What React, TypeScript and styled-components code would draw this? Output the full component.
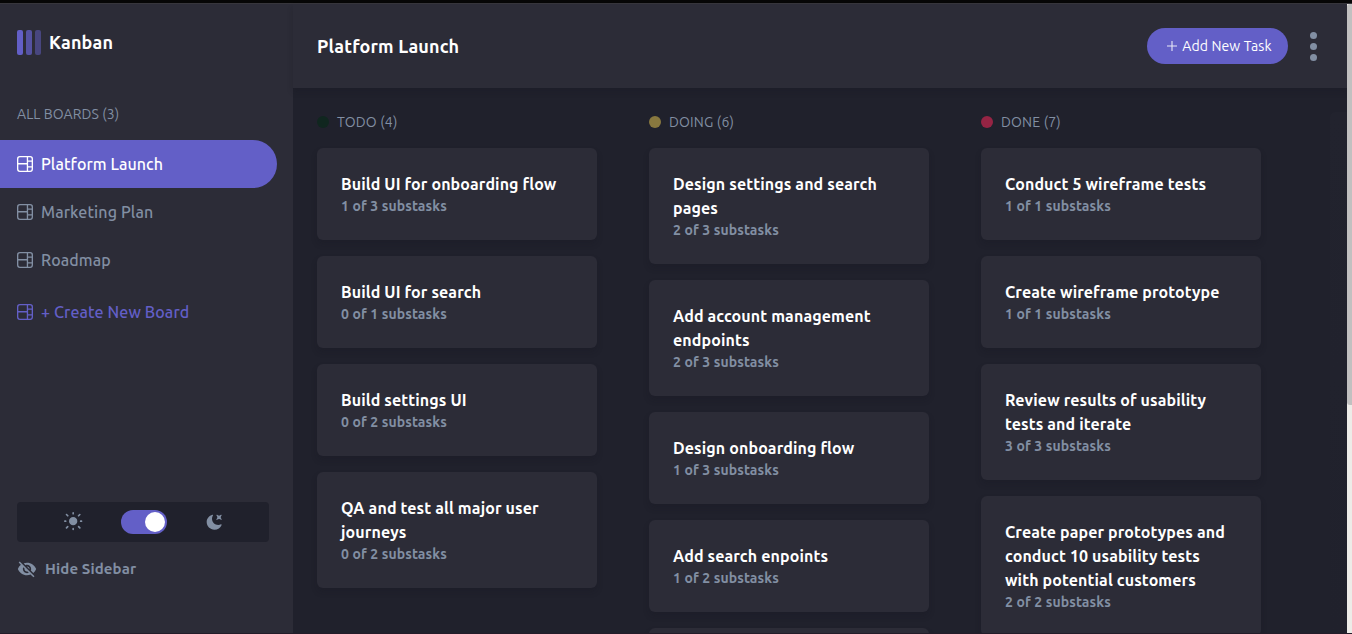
import React from 'react';
import styled, { createGlobalStyle, css } from 'styled-components';
import { MdVisibilityOff } from 'react-icons/md';

const GlobalStyle = createGlobalStyle`
  *, *::before, *::after { box-sizing: border-box; }
  body {
    margin: 0;
    overflow: hidden;
    background: #20212c;
    font-family: Ubuntu, 'Noto Sans', sans-serif;
    letter-spacing: 0.11px;
  }
  button { font: inherit; letter-spacing: inherit; border: 0; padding: 0; background: none; cursor: pointer; }
  h1, h2, h3, p { margin: 0; }
`;

const Page = styled.div`
  display: flex;
  flex-direction: column;
  height: 100vh;
  overflow: hidden;
  border-bottom: 1px solid #231c29;
`;

const TopEdge = styled.div`
  flex: none;
  height: 4px;
  background: #060606;
  border-bottom: 1px solid #37363c;
`;

const Shell = styled.div`
  flex: 1;
  display: flex;
  min-height: 0;
`;

const Sidebar = styled.aside`
  flex: none;
  width: 293px;
  display: flex;
  flex-direction: column;
  background: #2c2c37;
  padding: 26px 0 54px;
`;

const Brand = styled.div`
  display: flex;
  align-items: center;
  height: 25px;
  padding-left: 17px;
  gap: 8px;
`;

const LogoBars = styled.div`
  display: flex;
  gap: 3px;
`;

const LogoBar = styled.span<{ $opacity: number }>`
  width: 6px;
  height: 25px;
  border-radius: 2px;
  background: #635fc7;
  opacity: ${(p) => p.$opacity};
`;

const BrandName = styled.h1`
  padding-bottom: 1px;
  font-size: 18px;
  line-height: 26px;
  font-weight: 700;
  color: #fff;
  letter-spacing: 0.15px;
`;

const BoardsLabel = styled.p`
  margin: 49px 0 16px 17px;
  font-size: 14px;
  line-height: 20px;
  letter-spacing: 0.07px;
  color: #828fa3;
`;

const BoardList = styled.nav`
  display: flex;
  flex-direction: column;
  width: 277px;
`;

const BoardLink = styled.button<{ $tone?: 'active' | 'create' }>`
  display: flex;
  align-items: center;
  gap: 8px;
  height: 48px;
  padding-left: 17px;
  border-radius: 0 24px 24px 0;
  font-size: 16px;
  font-weight: 500;
  color: #828fa3;
  ${(p) => p.$tone === 'active' && css`
    background: #635fc7;
    color: #fff;
    letter-spacing: 0.06px;
  `}
  ${(p) => p.$tone === 'create' && css`
    margin-top: 4px;
    color: #635fc7;
  `}
`;

const ThemePanel = styled.div`
  display: flex;
  align-items: center;
  width: 252px;
  height: 40px;
  margin: auto 0 0 17px;
  padding-left: 47px;
  border-radius: 4px;
  background: #20212c;
  color: #828fa3;
  svg { display: block; }
`;

const Switch = styled.button`
  display: flex;
  align-items: center;
  justify-content: flex-end;
  width: 46px;
  height: 24px;
  margin: 0 39px 0 38px;
  padding-right: 2px;
  border-radius: 12px;
  background: #635fc7;
`;

const Knob = styled.span`
  width: 20px;
  height: 20px;
  border-radius: 50%;
  background: #fff;
`;

const HideButton = styled.button`
  display: flex;
  align-items: center;
  gap: 8px;
  height: 20px;
  margin: 17px 0 0 17px;
  font-size: 15px;
  font-weight: 700;
  letter-spacing: 0.12px;
  color: #828fa3;
`;

const HideText = styled.span`
  padding-bottom: 2px;
`;

const Main = styled.main`
  flex: 1;
  min-width: 0;
  display: flex;
  flex-direction: column;
  background: #20212c;
`;

const Header = styled.header`
  flex: none;
  display: flex;
  align-items: center;
  height: 84px;
  padding: 0 30px 0 24px;
  background: #2c2c37;
  box-shadow: 0 4px 6px rgba(20, 20, 30, 0.2);
`;

const BoardTitle = styled.h2`
  margin-right: auto;
  font-size: 18px;
  line-height: 28px;
  font-weight: 700;
  letter-spacing: 0.14px;
  color: #fff;
`;

const AddButton = styled.button`
  display: flex;
  align-items: center;
  justify-content: center;
  gap: 5px;
  width: 141px;
  height: 36px;
  padding-left: 4px;
  border-radius: 18px;
  background: #635fc7;
  color: #fff;
  font-size: 14px;
  line-height: 20px;
`;

const MoreButton = styled.button`
  display: flex;
  flex-direction: column;
  gap: 4px;
  margin-left: 22px;
`;

const MoreDot = styled.span`
  width: 7px;
  height: 7px;
  border-radius: 50%;
  background: #828fa3;
`;

const Board = styled.div`
  flex: 1;
  min-height: 0;
  display: flex;
  gap: 52px;
  padding: 24px 0 0 24px;
  overflow: hidden;
`;

const Column = styled.section`
  flex: none;
  width: 280px;
  display: flex;
  flex-direction: column;
  gap: 16px;
`;

const ColumnHead = styled.div`
  flex: none;
  display: flex;
  align-items: center;
  gap: 8px;
  height: 20px;
  font-size: 14px;
  letter-spacing: 0.17px;
  color: #828fa3;
`;

const StatusDot = styled.span<{ $color: string }>`
  width: 12px;
  height: 12px;
  border-radius: 50%;
  background: ${(p) => p.$color};
`;

const Card = styled.article`
  flex: none;
  min-height: 92px;
  padding: 24px;
  border-radius: 6px;
  background: #2c2c37;
  box-shadow: 0 4px 6px rgba(20, 20, 30, 0.2);
`;

const CardTitle = styled.h3`
  font-size: 16px;
  line-height: 24px;
  font-weight: 700;
  color: #fff;
`;

const CardMeta = styled.p`
  font-size: 14px;
  line-height: 20px;
  font-weight: 700;
  color: #828fa3;
`;

const NewColumn = styled.div`
  flex: none;
  width: 280px;
  margin-left: 17px;
  border-radius: 6px 0 0 0;
  background: linear-gradient(#22232e, #20212c);
`;

const ScrollTrack = styled.div`
  flex: none;
  width: 5px;
  background: #edece8;
`;

const ScrollThumb = styled.div`
  height: 401px;
  border-radius: 3px 0 0 3px;
  background: #c1c0c0;
`;

const BoardIcon = () => (
  <svg width="16" height="16" viewBox="0 0 16 16" fill="currentColor">
    <path d="M0 2.889A2.889 2.889 0 0 1 2.889 0H13.11A2.889 2.889 0 0 1 16 2.889V13.11A2.888 2.888 0 0 1 13.111 16H2.89A2.889 2.889 0 0 1 0 13.111V2.89Zm1.333 5.555v4.667c0 .859.697 1.556 1.556 1.556h6.889V8.444H1.333Zm8.445-1.333V1.333h-6.89A1.556 1.556 0 0 0 1.334 2.89V7.11h8.445Zm4.889-1.333H11.11v4.444h3.556V5.778Zm0 5.778H11.11v3.11h2a1.556 1.556 0 0 0 1.556-1.555v-1.555Zm0-7.112V2.89a1.555 1.555 0 0 0-1.556-1.556h-2v3.111h3.556Z" />
  </svg>
);

const SunIcon = () => (
  <svg width="19" height="20" viewBox="0 0 19 20" fill="currentColor">
    <path d="M9.167 15.833a.833.833 0 0 1 .833.834v.833a.833.833 0 0 1-1.667 0v-.833a.833.833 0 0 1 .834-.834ZM3.75 13.75a.833.833 0 0 1 .59 1.422l-1.25 1.25a.833.833 0 0 1-1.18-1.178l1.25-1.25a.833.833 0 0 1 .59-.244Zm10.833 0c.221 0 .433.088.59.244l1.25 1.25a.833.833 0 0 1-1.179 1.178l-1.25-1.25a.833.833 0 0 1 .59-1.422ZM9.167 5a4.167 4.167 0 1 1 0 8.334 4.167 4.167 0 0 1 0-8.334Zm-7.5 3.333a.833.833 0 0 1 0 1.667H.833a.833.833 0 1 1 0-1.667h.834Zm15.833 0a.833.833 0 0 1 0 1.667h-.833a.833.833 0 0 1 0-1.667h.833Zm-1.667-6.666a.833.833 0 0 1 .59 1.422l-1.25 1.25a.833.833 0 1 1-1.179-1.178l1.25-1.25a.833.833 0 0 1 .59-.244Zm-13.333 0c.221 0 .433.088.59.244l1.25 1.25a.833.833 0 0 1-1.18 1.178L1.91 3.09a.833.833 0 0 1 .59-1.422ZM9.167 0A.833.833 0 0 1 10 .833v.834a.833.833 0 1 1-1.667 0V.833A.833.833 0 0 1 9.167 0Z" />
  </svg>
);

const MoonIcon = () => (
  <svg width="16" height="16" viewBox="0 0 16 16" fill="currentColor">
    <path d="M6.474.682c.434-.11.718.406.481.78A6.067 6.067 0 0 0 6.01 4.72c0 3.418 2.827 6.187 6.314 6.187.89.002 1.77-.182 2.584-.54.408-.18.894.165.724.57-1.16 2.775-3.944 4.73-7.194 4.73-4.292 0-7.771-3.41-7.771-7.615 0-3.541 2.466-6.518 5.807-7.37Zm8.433.07c.442-.294.969.232.674.674l-.525.787a1.943 1.943 0 0 0 0 2.157l.525.788c.295.441-.232.968-.674.673l-.787-.525a1.943 1.943 0 0 0-2.157 0l-.786.525c-.442.295-.97-.232-.675-.673l.525-.788a1.943 1.943 0 0 0 0-2.157l-.525-.787c-.295-.442.232-.968.674-.673l.787.525a1.943 1.943 0 0 0 2.157 0l.787-.525Z" />
  </svg>
);

const PlusIcon = () => (
  <svg width="10" height="10" viewBox="0 0 10 10" fill="none" stroke="currentColor" strokeOpacity="0.85">
    <path d="M0 5H10M5 0V10" strokeWidth="1.1" />
  </svg>
);

type Task = { title: string; meta: string };

const columns: { name: string; count: number; color: string; tasks: Task[] }[] = [
  {
    name: 'TODO', count: 4, color: '#10261f',
    tasks: [
      { title: 'Build UI for onboarding flow', meta: '1 of 3 substasks' },
      { title: 'Build UI for search', meta: '0 of 1 substasks' },
      { title: 'Build settings UI', meta: '0 of 2 substasks' },
      { title: 'QA and test all major user journeys', meta: '0 of 2 substasks' },
    ],
  },
  {
    name: 'DOING', count: 6, color: '#88783f',
    tasks: [
      { title: 'Design settings and search pages', meta: '2 of 3 substasks' },
      { title: 'Add account management endpoints', meta: '2 of 3 substasks' },
      { title: 'Design onboarding flow', meta: '1 of 3 substasks' },
      { title: 'Add search enpoints', meta: '1 of 2 substasks' },
      { title: '', meta: '' },
    ],
  },
  {
    name: 'DONE', count: 7, color: '#962444',
    tasks: [
      { title: 'Conduct 5 wireframe tests', meta: '1 of 1 substasks' },
      { title: 'Create wireframe prototype', meta: '1 of 1 substasks' },
      { title: 'Review results of usability tests and iterate', meta: '3 of 3 substasks' },
      { title: 'Create paper prototypes and conduct 10 usability tests with potential customers', meta: '2 of 2 substasks' },
    ],
  },
];

const boards = ['Platform Launch', 'Marketing Plan', 'Roadmap'];

export default function App() {
  return (
    <>
      <GlobalStyle />
      <Page>
        <TopEdge />
        <Shell>
          <Sidebar>
            <Brand>
              <LogoBars>
                <LogoBar $opacity={1} />
                <LogoBar $opacity={0.75} />
                <LogoBar $opacity={0.5} />
              </LogoBars>
              <BrandName>Kanban</BrandName>
            </Brand>
            <BoardsLabel>ALL BOARDS (3)</BoardsLabel>
            <BoardList>
              {boards.map((name, i) => (
                <BoardLink key={name} $tone={i === 0 ? 'active' : undefined}>
                  <BoardIcon />
                  {name}
                </BoardLink>
              ))}
              <BoardLink $tone="create">
                <BoardIcon />+ Create New Board
              </BoardLink>
            </BoardList>
            <ThemePanel>
              <SunIcon />
              <Switch aria-label="Dark theme">
                <Knob />
              </Switch>
              <MoonIcon />
            </ThemePanel>
            <HideButton>
              <MdVisibilityOff size={20} />
              <HideText>Hide Sidebar</HideText>
            </HideButton>
          </Sidebar>
          <Main>
            <Header>
              <BoardTitle>Platform Launch</BoardTitle>
              <AddButton>
                <PlusIcon />
                Add New Task
              </AddButton>
              <MoreButton aria-label="Board menu">
                <MoreDot />
                <MoreDot />
                <MoreDot />
              </MoreButton>
            </Header>
            <Board>
              {columns.map((c) => (
                <Column key={c.name}>
                  <ColumnHead>
                    <StatusDot $color={c.color} />
                    {c.name} ({c.count})
                  </ColumnHead>
                  {c.tasks.map((t, i) => (
                    <Card key={i}>
                      <CardTitle>{t.title}</CardTitle>
                      <CardMeta>{t.meta}</CardMeta>
                    </Card>
                  ))}
                </Column>
              ))}
              <NewColumn />
            </Board>
          </Main>
          <ScrollTrack>
            <ScrollThumb />
          </ScrollTrack>
        </Shell>
      </Page>
    </>
  );
}
